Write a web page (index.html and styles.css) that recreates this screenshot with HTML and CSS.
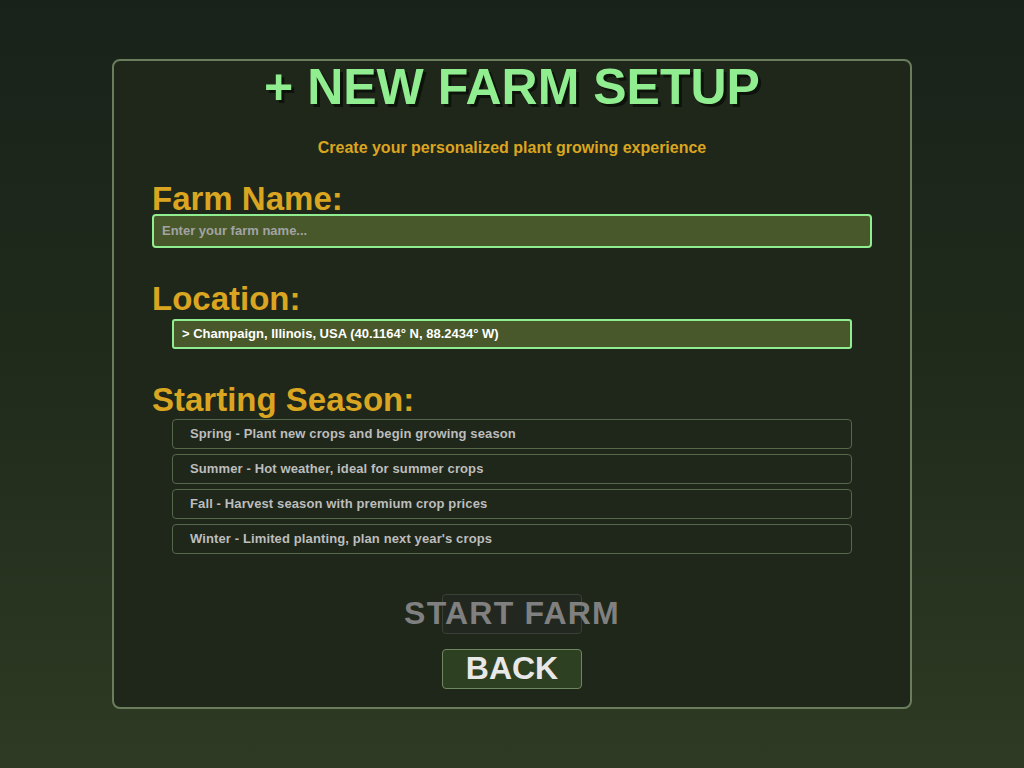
FILE: index.html
```html
<!DOCTYPE html>
<html>
<head>
<meta charset="utf-8">
<link rel="stylesheet" href="styles.css">
</head>
<body>
<div class="panel">
  <h1 class="title">+ NEW FARM SETUP</h1>
  <p class="subtitle">Create your personalized plant growing experience</p>

  <div class="label label-first">Farm Name:</div>
  <div class="input"><span class="placeholder">Enter your farm name...</span></div>

  <div class="label label-gap">Location:</div>
  <div class="location">&gt; Champaign, Illinois, USA (40.1164° N, 88.2434° W)</div>

  <div class="label label-gap">Starting Season:</div>
  <div class="seasons">
    <div class="season">Spring - Plant new crops and begin growing season</div>
    <div class="season">Summer - Hot weather, ideal for summer crops</div>
    <div class="season">Fall - Harvest season with premium crop prices</div>
    <div class="season">Winter - Limited planting, plan next year's crops</div>
  </div>

  <div class="buttons">
    <div class="btn btn-start"><span>START FARM</span></div>
    <div class="btn btn-back"><span>BACK</span></div>
  </div>
</div>
</body>
</html>
```
FILE: styles.css
```css
html, body {
  margin: 0;
  padding: 0;
}
body {
  width: 1024px;
  height: 768px;
  overflow: hidden;
  background: linear-gradient(to bottom, #19221a 0%, #1f2a1b 45%, #2e3a23 100%);
  font-family: "Liberation Sans", Arial, sans-serif;
  font-weight: bold;
}
.panel {
  box-sizing: border-box;
  width: 800px;
  height: 650px;
  margin: 59px auto 0;
  border: 2px solid #6b7d5c;
  border-radius: 8px;
  background: #1f271a;
  padding: 0 38px;
  display: flex;
  flex-direction: column;
}
.title {
  margin: 0;
  font-size: 50px;
  line-height: 52px;
  color: #90ee90;
  text-align: center;
  text-shadow: 3px 3px 0 #0d130b;
}
.subtitle {
  margin: 25px 0 0;
  font-size: 16px;
  line-height: 20px;
  color: #daa520;
  text-align: center;
}
.label {
  font-size: 33px;
  line-height: 30px;
  color: #daa520;
}
.label-first {
  margin-top: 26px;
}
.label-gap {
  margin-top: 36px;
}
.input {
  box-sizing: border-box;
  height: 34px;
  border: 2px solid #90ee90;
  border-radius: 4px;
  background: #48582a;
  padding: 0 8px;
  display: flex;
  align-items: center;
}
.placeholder {
  font-size: 13px;
  color: #a3a3a3;
  position: relative;
  top: -1px;
}
.location {
  box-sizing: border-box;
  margin: 5px 20px 0;
  height: 30px;
  border: 2px solid #90ee90;
  border-radius: 3px;
  background: #48582a;
  padding: 0 8px 2px;
  display: flex;
  align-items: center;
  font-size: 13px;
  color: #ffffff;
}
.seasons {
  margin: 4px 20px 0;
  display: flex;
  flex-direction: column;
  gap: 5px;
}
.season {
  box-sizing: border-box;
  height: 30px;
  border: 1px solid #56674a;
  border-radius: 4px;
  padding: 0 17px 2px;
  display: flex;
  align-items: center;
  font-size: 13px;
  letter-spacing: 0.12px;
  color: #bdbdbd;
}
.buttons {
  margin-top: 40px;
  display: flex;
  flex-direction: column;
  align-items: center;
  gap: 15px;
}
.btn {
  box-sizing: border-box;
  width: 140px;
  height: 40px;
  border-radius: 4px;
  display: flex;
  align-items: center;
  justify-content: center;
  font-size: 32px;
  white-space: nowrap;
}
.btn span {
  position: relative;
  top: -1px;
}
.btn-start {
  background: #222820;
  border: 1px solid #3a4038;
  color: #808080;
  letter-spacing: 1.2px;
}
.btn-back {
  background: #2e4022;
  border: 1px solid #6e875e;
  color: #e8e8e8;
}
```
